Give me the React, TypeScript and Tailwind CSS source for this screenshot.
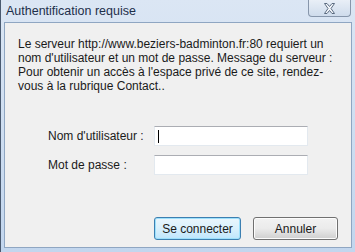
export default function App() {
  return (
    <div
      className="w-[355px] h-[252px] flex flex-col bg-gradient-to-b from-[#dbe6f4] to-[#c2d6ee] border-l border-[#4a5a70] overflow-hidden"
      style={{ fontFamily: '"Liberation Sans", Arial, sans-serif' }}
    >
      {/* Title bar */}
      <div className="h-[22px] flex items-start justify-between pl-[5px] pr-[4px]">
        <span className="text-[12.5px] leading-none mt-[5px] text-[#1e2f4a]">Authentification requise</span>
        <div className="w-[43px] h-[17px] rounded-b-[4px] border border-t-0 border-[#8796ab] bg-gradient-to-b from-[#e9eff7] to-[#cfdcec] flex items-center justify-center">
          <svg width="13" height="11" viewBox="0 0 13 11">
            <path
              d="M1.5 0.5 H4 L6.5 3.5 L9 0.5 H11.5 L8 5.5 L11.5 10.5 H9 L6.5 7.5 L4 10.5 H1.5 L5 5.5 Z"
              fill="#f4f7fb"
              stroke="#5b6b80"
              strokeWidth="1"
              strokeLinejoin="round"
            />
          </svg>
        </div>
      </div>

      {/* Client area */}
      <div className="flex-1 mx-[3px] mb-[4px] border border-[#8fa6c2] bg-[#f0f0f0] text-[12px] text-[#1a1a1a]">
        <p className="pl-[13px] pt-[14px] leading-[14px]">
          Le serveur http://www.beziers-badminton.fr:80 requiert un
          <br />
          nom d'utilisateur et un mot de passe. Message du serveur :
          <br />
          Pour obtenir un accès à l'espace privé de ce site, rendez-
          <br />
          vous à la rubrique Contact..
        </p>

        <div className="mt-[33px] flex flex-col gap-[9px]">
          <div className="flex items-center">
            <label className="w-[149px] pl-[43px]">Nom d'utilisateur :</label>
            <div className="w-[154px] h-[20px] bg-white border border-[#e3e9ef] border-t-[#abadb3] flex items-center pl-[3px]">
              <span className="w-px h-[13px] bg-black" />
            </div>
          </div>
          <div className="flex items-center">
            <label className="w-[149px] pl-[43px]">Mot de passe :</label>
            <div className="w-[154px] h-[20px] bg-white border border-[#e3e9ef] border-t-[#abadb3]" />
          </div>
        </div>

        <div className="mt-[42px] flex justify-end gap-[12px] pr-[13px]">
          <button className="w-[87px] h-[23px] rounded-[3px] border border-[#3c7fb1] bg-gradient-to-b from-[#eaf6fd] via-[#d9f0fc] to-[#bee6fd] shadow-[inset_0_0_0_1px_#9de0fb] text-[12px] text-[#1a1a1a]">
            Se connecter
          </button>
          <button className="w-[85px] h-[23px] rounded-[3px] border border-[#707070] bg-gradient-to-b from-[#f2f2f2] via-[#ebebeb] to-[#cfcfcf] shadow-[inset_0_0_0_1px_#fcfcfc] text-[12px] text-[#1a1a1a]">
            Annuler
          </button>
        </div>
      </div>
    </div>
  );
}
